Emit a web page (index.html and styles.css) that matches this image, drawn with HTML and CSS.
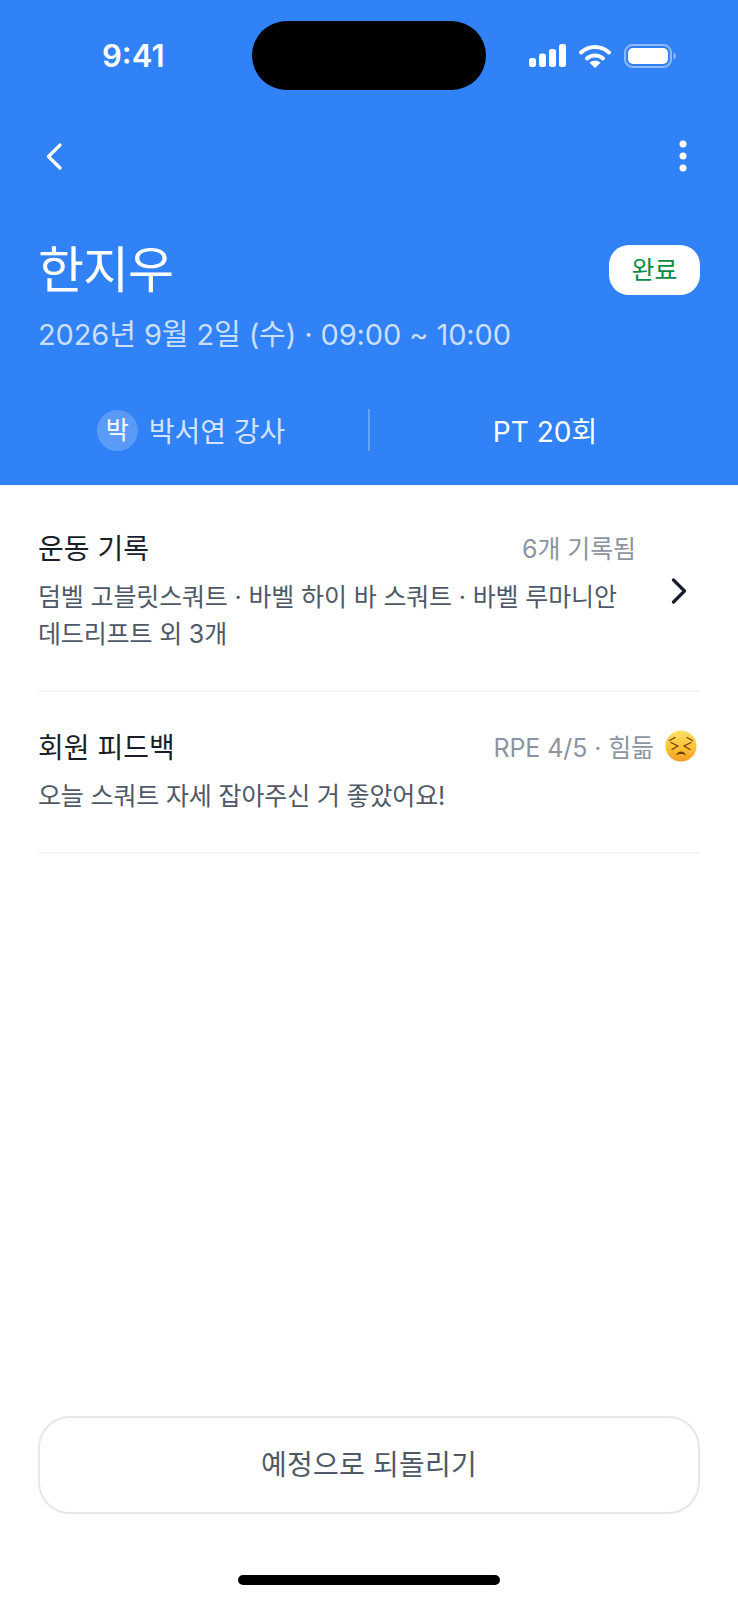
FILE: index.html
```html
<!DOCTYPE html>
<html lang="ko">
<head>
  <meta charset="UTF-8" />
  <meta name="viewport" content="width=device-width, initial-scale=1.0"/>
  <title>한지우 수업 상세</title>
  <link rel="stylesheet" href="styles.css">
</head>
<body>
  <div class="screen">
    <header class="hero">
      <div class="status-bar">
        <span class="status-time">9:41</span>
        <div class="island"></div>
        <div class="status-icons">
          <svg class="icon-signal" viewBox="0 0 37 23" width="37" height="23">
            <rect x="0" y="14" width="7" height="9" rx="2.5" fill="#fff"/>
            <rect x="10" y="9.5" width="7" height="13.5" rx="2.5" fill="#fff"/>
            <rect x="20" y="5" width="7" height="18" rx="2.5" fill="#fff"/>
            <rect x="30" y="0" width="7" height="23" rx="2.5" fill="#fff"/>
          </svg>
          <svg class="icon-wifi" viewBox="0 0 32 24" width="32" height="24">
            <path d="M2 8.5C10 1 22 1 30 8.5" fill="none" stroke="#fff" stroke-width="4" stroke-linecap="round"/>
            <path d="M8 14.5C12.5 10.5 19.5 10.5 24 14.5" fill="none" stroke="#fff" stroke-width="4" stroke-linecap="round"/>
            <path d="M16 24L10.5 18.8C13.5 16.2 18.5 16.2 21.5 18.8Z" fill="#fff"/>
          </svg>
          <svg class="icon-battery" viewBox="0 0 52 24" width="52" height="24">
            <rect x="1" y="1" width="46" height="22" rx="7.5" fill="none" stroke="#fff" stroke-opacity="0.45" stroke-width="2"/>
            <rect x="4" y="4" width="40" height="16" rx="5" fill="#fff"/>
            <path d="M49.5 8.5C51 9.3 52 10.5 52 12S51 14.700 49.500 15.500Z" fill="#fff" fill-opacity="0.45"/>
          </svg>
        </div>
      </div>

      <nav class="nav-row">
        <svg class="icon-back" viewBox="0 0 16 27" width="16" height="27">
          <path d="M14 2L2.500 13.500L14 25" fill="none" stroke="#fff" stroke-width="3.200" stroke-linecap="round" stroke-linejoin="round"/>
        </svg>
        <svg class="icon-more" viewBox="0 0 8 32" width="8" height="32">
          <circle cx="4" cy="4" r="3.500" fill="#fff"/>
          <circle cx="4" cy="16" r="3.500" fill="#fff"/>
          <circle cx="4" cy="28" r="3.500" fill="#fff"/>
        </svg>
      </nav>

      <div class="title-row">
        <h1 class="member-name">한지우</h1>
        <span class="badge-done">완료</span>
      </div>
      <p class="lesson-date">2026년 9월 2일 (수) · 09:00 ~ 10:00</p>

      <div class="meta-row">
        <div class="meta-cell meta-trainer">
          <span class="avatar">박</span>
          <span class="trainer-name">박서연 강사</span>
        </div>
        <div class="meta-divider"></div>
        <div class="meta-cell meta-pass">PT 20회</div>
      </div>
    </header>

    <main class="content">
      <section class="record record-workout">
        <div class="record-body">
          <div class="record-head">
            <h2 class="record-title">운동 기록</h2>
            <span class="record-side">6개 기록됨</span>
          </div>
          <p class="record-text">덤벨 고블릿스쿼트 · 바벨 하이 바 스쿼트 · 바벨 루마니안 데드리프트 외 3개</p>
        </div>
        <svg class="icon-next" viewBox="0 0 16 26" width="16" height="26">
          <path d="M2.500 2L13.500 13L2.500 24" fill="none" stroke="#191f28" stroke-width="3.200" stroke-linecap="round" stroke-linejoin="round"/>
        </svg>
      </section>

      <section class="record record-feedback">
        <div class="record-body">
          <div class="record-head">
            <h2 class="record-title">회원 피드백</h2>
            <span class="record-side">RPE 4/5 · 힘듦
              <svg class="emoji-tired" viewBox="0 0 32 32" width="32" height="32">
                <defs>
                  <linearGradient id="faceFill" x1="0" y1="0" x2="0" y2="1">
                    <stop offset="0%" stop-color="#ffe066"/>
                    <stop offset="60%" stop-color="#fdc030"/>
                    <stop offset="100%" stop-color="#f59a25"/>
                  </linearGradient>
                </defs>
                <circle cx="16" cy="16" r="15.500" fill="url(#faceFill)"/>
                <g fill="none" stroke="#6a3d14" stroke-width="1.300" stroke-linecap="round" stroke-linejoin="round">
                  <path d="M4.500 10.500L10 7.500"/>
                  <path d="M27.500 10.500L22 7.500"/>
                  <path d="M6 12.500L13 16L7 19.500"/>
                  <path d="M26 12.500L19 16L25 19.500"/>
                </g>
                <path d="M11 25.500C12 22.500 13.800 21.500 16 21.500S20 22.500 21 25.500C19.300 24.400 17.800 24 16 24S12.700 24.400 11 25.500Z" fill="#6a3d14"/>
              </svg>
            </span>
          </div>
          <p class="record-text">오늘 스쿼트 자세 잡아주신 거 좋았어요!</p>
        </div>
      </section>
    </main>

    <footer class="bottom">
      <button class="btn-revert">예정으로 되돌리기</button>
      <div class="home-bar"></div>
    </footer>
  </div>
</body>
</html>
```

FILE: styles.css
```css
* {
  box-sizing: border-box;
}

body {
  margin: 0;
  background: #ffffff;
  color: #191f28;
  font-family: Inter, 'Noto Sans CJK KR', sans-serif;
}

.screen {
  width: 738px;
  height: 1600px;
  display: flex;
  flex-direction: column;
  overflow: hidden;
}

.hero {
  background: #3182f6;
  color: #ffffff;
  height: 485px;
  padding: 21px 38px 0;
}

.status-bar {
  display: flex;
  align-items: center;
  height: 69px;
  margin: 0 -38px;
  padding: 0 62px 0 102px;
}

.status-time {
  width: 150px;
  font-size: 31px;
  font-weight: 600;
}

.island {
  width: 234px;
  height: 69px;
  background: #000000;
  border-radius: 35px;
}

.status-icons {
  display: flex;
  align-items: center;
  gap: 13px;
  margin-left: 43px;
}

.nav-row {
  display: flex;
  justify-content: space-between;
  align-items: center;
  height: 50px;
  margin-top: 41px;
  padding: 0 13px 0 8px;
}

.title-row {
  display: flex;
  justify-content: space-between;
  align-items: center;
  margin-top: 59px;
  height: 60px;
}

.member-name {
  margin: 0;
  font-size: 50px;
  font-weight: 400;
  line-height: 60px;
  letter-spacing: -1px;
}

.badge-done {
  width: 91px;
  height: 50px;
  background: #ffffff;
  color: #0b8a45;
  border-radius: 20px;
  font-size: 25px;
  line-height: 50px;
  text-align: center;
}

.lesson-date {
  margin: 15px 0 0;
  font-size: 29px;
  line-height: 40px;
  color: rgba(255, 255, 255, 0.75);
  letter-spacing: -0.1px;
}

.meta-row {
  display: flex;
  align-items: center;
  height: 42px;
  margin-top: 54px;
}

.meta-cell {
  flex: 0 0 330px;
  display: flex;
  justify-content: center;
  align-items: center;
  gap: 11px;
  font-size: 28px;
}

.meta-trainer {
  padding-right: 24px;
}

.meta-pass {
  padding-left: 20px;
}

.avatar {
  width: 41px;
  height: 41px;
  border-radius: 50%;
  background: rgba(255, 255, 255, 0.2);
  font-size: 25px;
  line-height: 41px;
  text-align: center;
}

.trainer-name {
  color: rgba(255, 255, 255, 0.8);
}

.meta-divider {
  width: 2px;
  height: 42px;
  background: rgba(255, 255, 255, 0.25);
}

.content {
  flex: 1;
  padding: 0 38px;
}

.record {
  display: flex;
  align-items: center;
  gap: 35px;
  border-bottom: 2px solid #f2f4f6;
}

.record-workout {
  padding: 44px 13px 37px 0;
}

.record-feedback {
  padding: 36px 0 37px;
}

.record-body {
  flex: 1;
  min-width: 0;
}

.record-head {
  display: flex;
  justify-content: space-between;
  align-items: center;
  height: 36px;
}

.record-title {
  margin: 0;
  font-size: 28px;
  font-weight: 400;
  color: #191f28;
}

.record-side {
  display: flex;
  align-items: center;
  gap: 11px;
  font-size: 25px;
  letter-spacing: -0.1px;
  color: #8b95a1;
  white-space: nowrap;
}

.record-text {
  margin: 14px 0 0;
  font-size: 25px;
  line-height: 37px;
  letter-spacing: -0.15px;
  color: #4e5968;
}

.emoji-tired {
  margin-right: 3px;
}

.bottom {
  padding: 0 38px;
}

.btn-revert {
  display: block;
  width: 100%;
  height: 98px;
  padding-bottom: 5px;
  background: #ffffff;
  border: 2px solid #e5e8eb;
  border-radius: 32px;
  font-family: inherit;
  font-size: 28px;
  letter-spacing: 0.2px;
  color: #4e5968;
}

.home-bar {
  width: 262px;
  height: 10px;
  margin: 61px auto 15px;
  background: #000000;
  border-radius: 5px;
}
```
